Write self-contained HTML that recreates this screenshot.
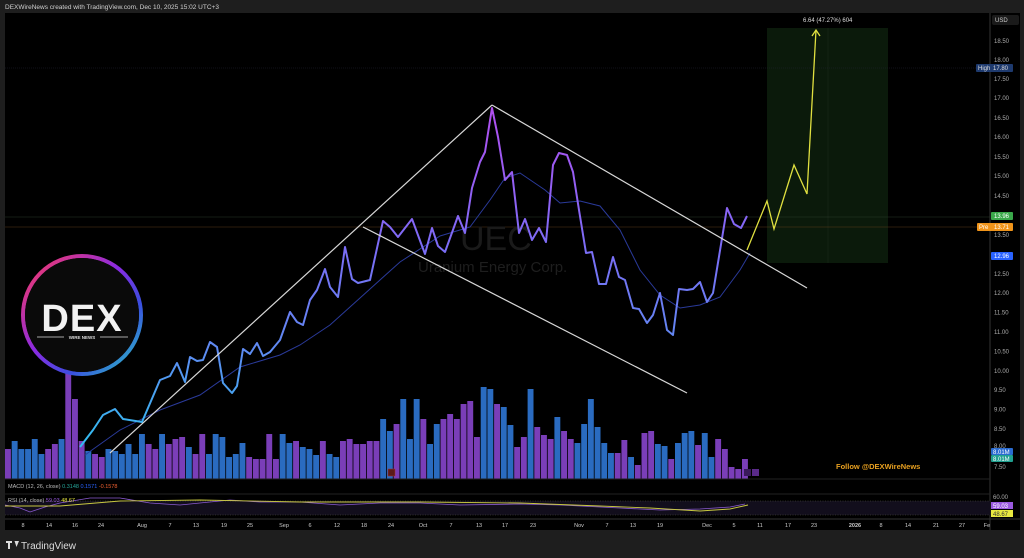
<!DOCTYPE html>
<html><head><meta charset="utf-8"><style>
body{margin:0;width:1024px;height:558px;overflow:hidden;background:#1e1e1e;font-family:"Liberation Sans",sans-serif}
svg{display:block}
</style></head><body>
<svg id="s" width="1024" height="558" viewBox="0 0 1024 558" xmlns="http://www.w3.org/2000/svg" font-family="Liberation Sans, sans-serif">
<defs>
<linearGradient id="pg" gradientUnits="userSpaceOnUse" x1="0" y1="110" x2="0" y2="450">
<stop offset="0" stop-color="#b14ff0"/><stop offset="0.4" stop-color="#7c6cf6"/><stop offset="0.7" stop-color="#5f8af2"/><stop offset="1" stop-color="#2fc0f0"/></linearGradient>
<linearGradient id="rg" x1="0" y1="0" x2="1" y2="1">
<stop offset="0" stop-color="#ff3b5c"/><stop offset="0.45" stop-color="#8a2be2"/><stop offset="0.7" stop-color="#3a4ee0"/><stop offset="1" stop-color="#2ad0c0"/></linearGradient>
</defs>
<rect x="0" y="0" width="1024" height="558" fill="#1e1e1e"/>
<rect x="5" y="13" width="1015" height="517" fill="#000"/>
<text x="5" y="9" font-size="6.5" fill="#d0d0d0">DEXWireNews created with TradingView.com, Dec 10, 2025 15:02 UTC+3</text>
<line x1="990" y1="13" x2="990" y2="530" stroke="#333" stroke-width="1"/>
<rect x="992" y="15" width="27" height="10" rx="2" fill="#1a1a1a"/>
<text x="995" y="22" font-size="6" fill="#ccc">USD</text>
<rect x="767" y="28" width="121" height="235" fill="#0b1a0b"/>
<line x1="828" y1="28" x2="828" y2="263" stroke="#1a2a1a" stroke-width="0.6"/>
<text x="803" y="22" font-size="6" fill="#ddd">6.64 (47.27%) 604</text>
<line x1="5" y1="68" x2="990" y2="68" stroke="#223" stroke-width="0.6" stroke-dasharray="1,1"/>
<line x1="5" y1="217" x2="990" y2="217" stroke="#2a3a2a" stroke-width="0.6"/>
<line x1="5" y1="227" x2="990" y2="227" stroke="#5a3a18" stroke-width="0.6"/>
<text x="460" y="250" font-size="34" fill="#1a1a1a">UEC</text>
<text x="418" y="272" font-size="15" fill="#1e1e1e">Uranium Energy Corp.</text>
<g id="vol"></g>
<polyline fill="none" stroke="#2a3a9a" stroke-width="1" points="85,455 120,430 160,410 200,395 240,367 280,355 300,345 330,325 360,298 400,262 440,236 470,227 490,200 505,178 520,173 545,190 560,203 580,201 600,206 620,230 640,270 660,295 680,308 700,305 720,297 740,270 750,253"/>
<polyline fill="none" stroke="url(#pg)" stroke-width="2" stroke-linejoin="round" points="80,447 93,430 103,415 115,409 123,419 142,422 160,380 170,376 177,363 185,382 190,357 197,361 203,360 210,342 217,347 223,383 232,393 237,386 243,349 250,354 257,343 263,356 270,352 280,340 290,312 297,322 303,325 310,300 317,290 325,269 330,287 338,297 345,247 352,279 358,283 370,280 383,221 390,227 398,237 412,219 425,254 432,228 438,246 445,252 458,216 465,233 472,188 480,162 485,152 492,108 498,137 505,180 512,172 519,233 525,219 532,240 539,228 546,242 553,165 559,153 567,155 573,172 579,210 586,253 592,252 599,284 606,284 613,257 619,277 625,280 633,308 639,309 647,323 653,315 660,293 667,330 673,335 679,289 687,290 693,289 700,282 707,302 713,293 727,208 734,224 741,228 747,216"/>
<polyline fill="none" stroke="#e0e040" stroke-width="1.3" points="747,250 767,201 774,229 794,165 807,194 816,30"/>
<polyline fill="none" stroke="#e0e040" stroke-width="1.3" points="812,36 816,30 820,36"/>
<g stroke="#d8d8d8" stroke-width="1.2">
<line x1="110" y1="453" x2="492" y2="105"/>
<line x1="492" y1="105" x2="807" y2="288"/>
<line x1="363" y1="227" x2="687" y2="393"/>
</g>
<circle cx="82" cy="315" r="59" fill="none" stroke="url(#rg)" stroke-width="4"/>
<circle cx="82" cy="315" r="57" fill="#0a0a0a"/>
<text x="82" y="331" font-size="38" font-weight="bold" fill="#f2f2f2" text-anchor="middle" letter-spacing="1">DEX</text>
<line x1="37" y1="337" x2="64" y2="337" stroke="#ddd" stroke-width="0.8"/>
<line x1="100" y1="337" x2="128" y2="337" stroke="#ddd" stroke-width="0.8"/>
<text x="82" y="339" font-size="4.5" font-weight="bold" fill="#ddd" text-anchor="middle">WIRE NEWS</text>
<text x="836" y="469" font-size="7.5" font-weight="bold" fill="#e8a020">Follow @DEXWireNews</text>
<rect x="388" y="469" width="7" height="7" fill="#5a1a1a" stroke="#a33" stroke-width="0.5"/>
<rect x="744" y="469" width="7" height="7" fill="#3a1a5a"/><rect x="752" y="469" width="7" height="7" fill="#5a2a8a"/>
<g font-size="6" fill="#aaa" id="ax"></g>
<rect x="976" y="64" width="37" height="8" rx="1" fill="#1e3a6e"/>
<text x="978" y="70" font-size="6" fill="#ddd">High</text><text x="993" y="70" font-size="6" fill="#ddd">17.80</text>
<rect x="991" y="212" width="22" height="8" rx="1" fill="#3aa84a"/><text x="994" y="218" font-size="6" fill="#fff">13.96</text>
<rect x="977" y="223" width="36" height="8" rx="1" fill="#f0941a"/><text x="979" y="229" font-size="6" fill="#fff">Pre</text><text x="994" y="229" font-size="6" fill="#fff">13.71</text>
<rect x="991" y="252" width="22" height="8" rx="1" fill="#2962ff"/><text x="994" y="258" font-size="6" fill="#fff">12.96</text>
<rect x="991" y="448" width="22" height="7" rx="1" fill="#2a6bd0"/><text x="993" y="454" font-size="6" fill="#fff">8.01M</text>
<rect x="991" y="455" width="22" height="7" rx="1" fill="#20a090"/><text x="993" y="461" font-size="6" fill="#fff">8.01M</text>
<text x="994" y="448" font-size="6" fill="#aaa">8.00</text><text x="994" y="469" font-size="6" fill="#aaa">7.50</text>
<line x1="5" y1="479" x2="990" y2="479" stroke="#222"/>
<line x1="5" y1="494" x2="990" y2="494" stroke="#222"/>
<line x1="5" y1="519" x2="1020" y2="519" stroke="#333"/>
<text x="8" y="488" font-size="5.5" fill="#bbb">MACD (12, 26, close) <tspan fill="#26a69a">0.3148</tspan> <tspan fill="#2962ff">0.1571</tspan> <tspan fill="#f06030">-0.1578</tspan></text>
<rect x="5" y="501" width="985" height="14" fill="#120e1c"/>
<line x1="5" y1="501" x2="990" y2="501" stroke="#554" stroke-width="0.5" stroke-dasharray="1,1.5"/>
<line x1="5" y1="515" x2="990" y2="515" stroke="#554" stroke-width="0.5" stroke-dasharray="1,1.5"/>
<polyline fill="none" stroke="#8a5ad0" stroke-width="0.8" points="5,505 20,508 30,512 45,507 60,503 90,498 120,498 150,503 180,505 230,500 260,502 300,502 340,505 380,503 420,503 460,505 520,504 560,505 620,508 660,510 700,509 730,507 745,504"/>
<polyline fill="none" stroke="#c8c840" stroke-width="0.9" points="5,506 60,506 120,501 200,500 300,502 420,502 520,503 600,506 650,508 700,511 730,509 748,505"/>
<text x="8" y="502" font-size="5.5" fill="#bbb">RSI (14, close) <tspan fill="#9a5ae0">59.03</tspan> <tspan fill="#e8e840">48.67</tspan></text>
<text x="993" y="499" font-size="6" fill="#aaa">60.00</text>
<rect x="991" y="502" width="22" height="7" fill="#9a5ae0"/><text x="993" y="508" font-size="6" fill="#fff">59.03</text>
<rect x="991" y="510" width="22" height="7" fill="#e8e840"/><text x="993" y="516" font-size="6" fill="#333">48.67</text>
<g font-size="5.5" fill="#ccc" text-anchor="middle" id="tx"></g>
<path d="M6 541h6v2h-2v6h-2v-6h-2z M12 541h2.5l2 6 2.5-6h-2.5" fill="#ddd"/>
<text x="21" y="549" font-size="10" fill="#ddd">TradingView</text>
</svg>
<script>
var NS="http://www.w3.org/2000/svg",v=document.getElementById('vol');
var h=[30,38,30,30,40,25,30,35,40,115,80,38,28,25,22,30,28,25,35,25,45,35,30,45,35,40,42,32,25,45,25,45,42,22,25,36,22,20,20,45,20,45,36,38,32,30,24,38,25,22,38,40,35,35,38,38,60,48,55,80,40,80,60,35,55,60,65,60,75,78,42,92,90,75,72,54,32,42,90,52,44,40,62,48,40,36,55,80,52,36,26,26,39,22,14,46,48,35,33,20,36,46,48,34,46,22,40,30,12,10,20];
for(var i=0;i<h.length;i++){var r=document.createElementNS(NS,'rect');var x=5+i*6.7;r.setAttribute('x',x);r.setAttribute('width',5.9);var hh=h[i];r.setAttribute('y',479-hh);r.setAttribute('height',hh);r.setAttribute('fill',(Math.sin(i*1.7)+Math.sin(i*0.45))>0?'#2a6bc0':'#7a3eb8');v.appendChild(r);}
var ax=document.getElementById('ax');
var labs=[[18.5,43],[18,62],[17.5,81],[17,100],[16.5,120],[16,139],[15.5,159],[15,178],[14.5,198],[13.5,237]];
for(var p=12.5;p>=8.49;p-=0.5){labs.push([p,237+(13.5-p)*38.8]);}
labs.forEach(function(a){var t=document.createElementNS(NS,'text');t.setAttribute('x',994);t.setAttribute('y',a[1]);t.textContent=a[0].toFixed(2);ax.appendChild(t);});
var tl=[[23,'8'],[49,'14'],[75,'16'],[101,'24'],[142,'Aug'],[170,'7'],[196,'13'],[224,'19'],[250,'25'],[284,'Sep'],[310,'6'],[337,'12'],[364,'18'],[391,'24'],[423,'Oct'],[451,'7'],[479,'13'],[505,'17'],[533,'23'],[579,'Nov'],[607,'7'],[633,'13'],[660,'19'],[707,'Dec'],[734,'5'],[760,'11'],[788,'17'],[814,'23'],[855,'2026'],[881,'8'],[908,'14'],[936,'21'],[962,'27'],[987,'Fe']];
var tx=document.getElementById('tx');tl.forEach(function(a){var t=document.createElementNS(NS,'text');t.setAttribute('x',a[0]);t.setAttribute('y',527);t.textContent=a[1];if(a[1]=='2026')t.setAttribute('font-weight','bold');tx.appendChild(t);});
</script>
</body></html>
